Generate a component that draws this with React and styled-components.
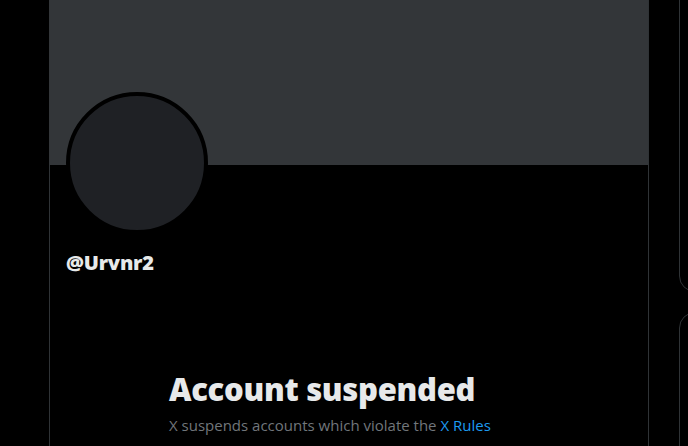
import React from 'react';
import styled, { createGlobalStyle } from 'styled-components';

const GlobalStyle = createGlobalStyle`
  html, body {
    margin: 0;
    padding: 0;
    background: #000;
    overflow: hidden;
  }
  body {
    font-family: "Open Sans", "Noto Sans", Arial, sans-serif;
    color: #e7e9ea;
  }
`;

const Page = styled.div`
  display: flex;
  height: 446px;
  overflow: hidden;
  background: #000;
`;

const LeftGutter = styled.div`
  width: 49px;
  flex-shrink: 0;
`;

const Column = styled.main`
  width: 598px;
  flex-shrink: 0;
  border-left: 1px solid #2f3336;
  border-right: 1px solid #2f3336;
  display: flex;
  flex-direction: column;
`;

const Banner = styled.div`
  height: 165px;
  background: #333639;
  margin-left: -1px;
`;

const ProfileHeader = styled.div`
  padding: 0 16px;
  display: flex;
  flex-direction: column;
`;

const Avatar = styled.div`
  width: 134px;
  height: 134px;
  margin-top: -73px;
  border-radius: 50%;
  background: #1f2125;
  border: 4px solid #000;
`;

const Handle = styled.div`
  margin-top: 17px;
  font-size: 20px;
  font-weight: 800;
  line-height: 24px;
  color: #e7e9ea;
  letter-spacing: -0.2px;
`;

const EmptyState = styled.section`
  max-width: 400px;
  margin: 96px auto 0;
  padding: 0 20px;
  width: 100%;
  box-sizing: border-box;
`;

const Title = styled.h1`
  margin: 0;
  font-size: 31px;
  font-weight: 800;
  line-height: 36px;
  color: #e7e9ea;
  letter-spacing: -0.3px;
`;

const Subtitle = styled.p`
  margin: 8px 0 0;
  font-size: 15px;
  line-height: 20px;
  color: #71767b;
`;

const RuleLink = styled.a`
  color: #1d9bf0;
  text-decoration: none;
`;

const Sidebar = styled.aside`
  margin-left: 30px;
  display: flex;
  flex-direction: column;
  gap: 20px;
  flex: 1;
  min-width: 0;
  overflow: hidden;
`;

const SideCard = styled.div`
  width: 340px;
  flex-shrink: 0;
  height: ${p => p.$h}px;
  margin-top: ${p => p.$top || 0}px;
  border: 1px solid #2f3336;
  border-radius: 16px;
`;

export default function App() {
  return (
    <>
      <GlobalStyle />
      <Page>
        <LeftGutter />
        <Column>
          <Banner />
          <ProfileHeader>
            <Avatar />
            <Handle>@Urvnr2</Handle>
          </ProfileHeader>
          <EmptyState>
            <Title>Account suspended</Title>
            <Subtitle>
              X suspends accounts which violate the <RuleLink href="#">X Rules</RuleLink>
            </Subtitle>
          </EmptyState>
        </Column>
        <Sidebar>
          <SideCard $h={306} $top={-16} />
          <SideCard $h={300} />
        </Sidebar>
      </Page>
    </>
  );
}
